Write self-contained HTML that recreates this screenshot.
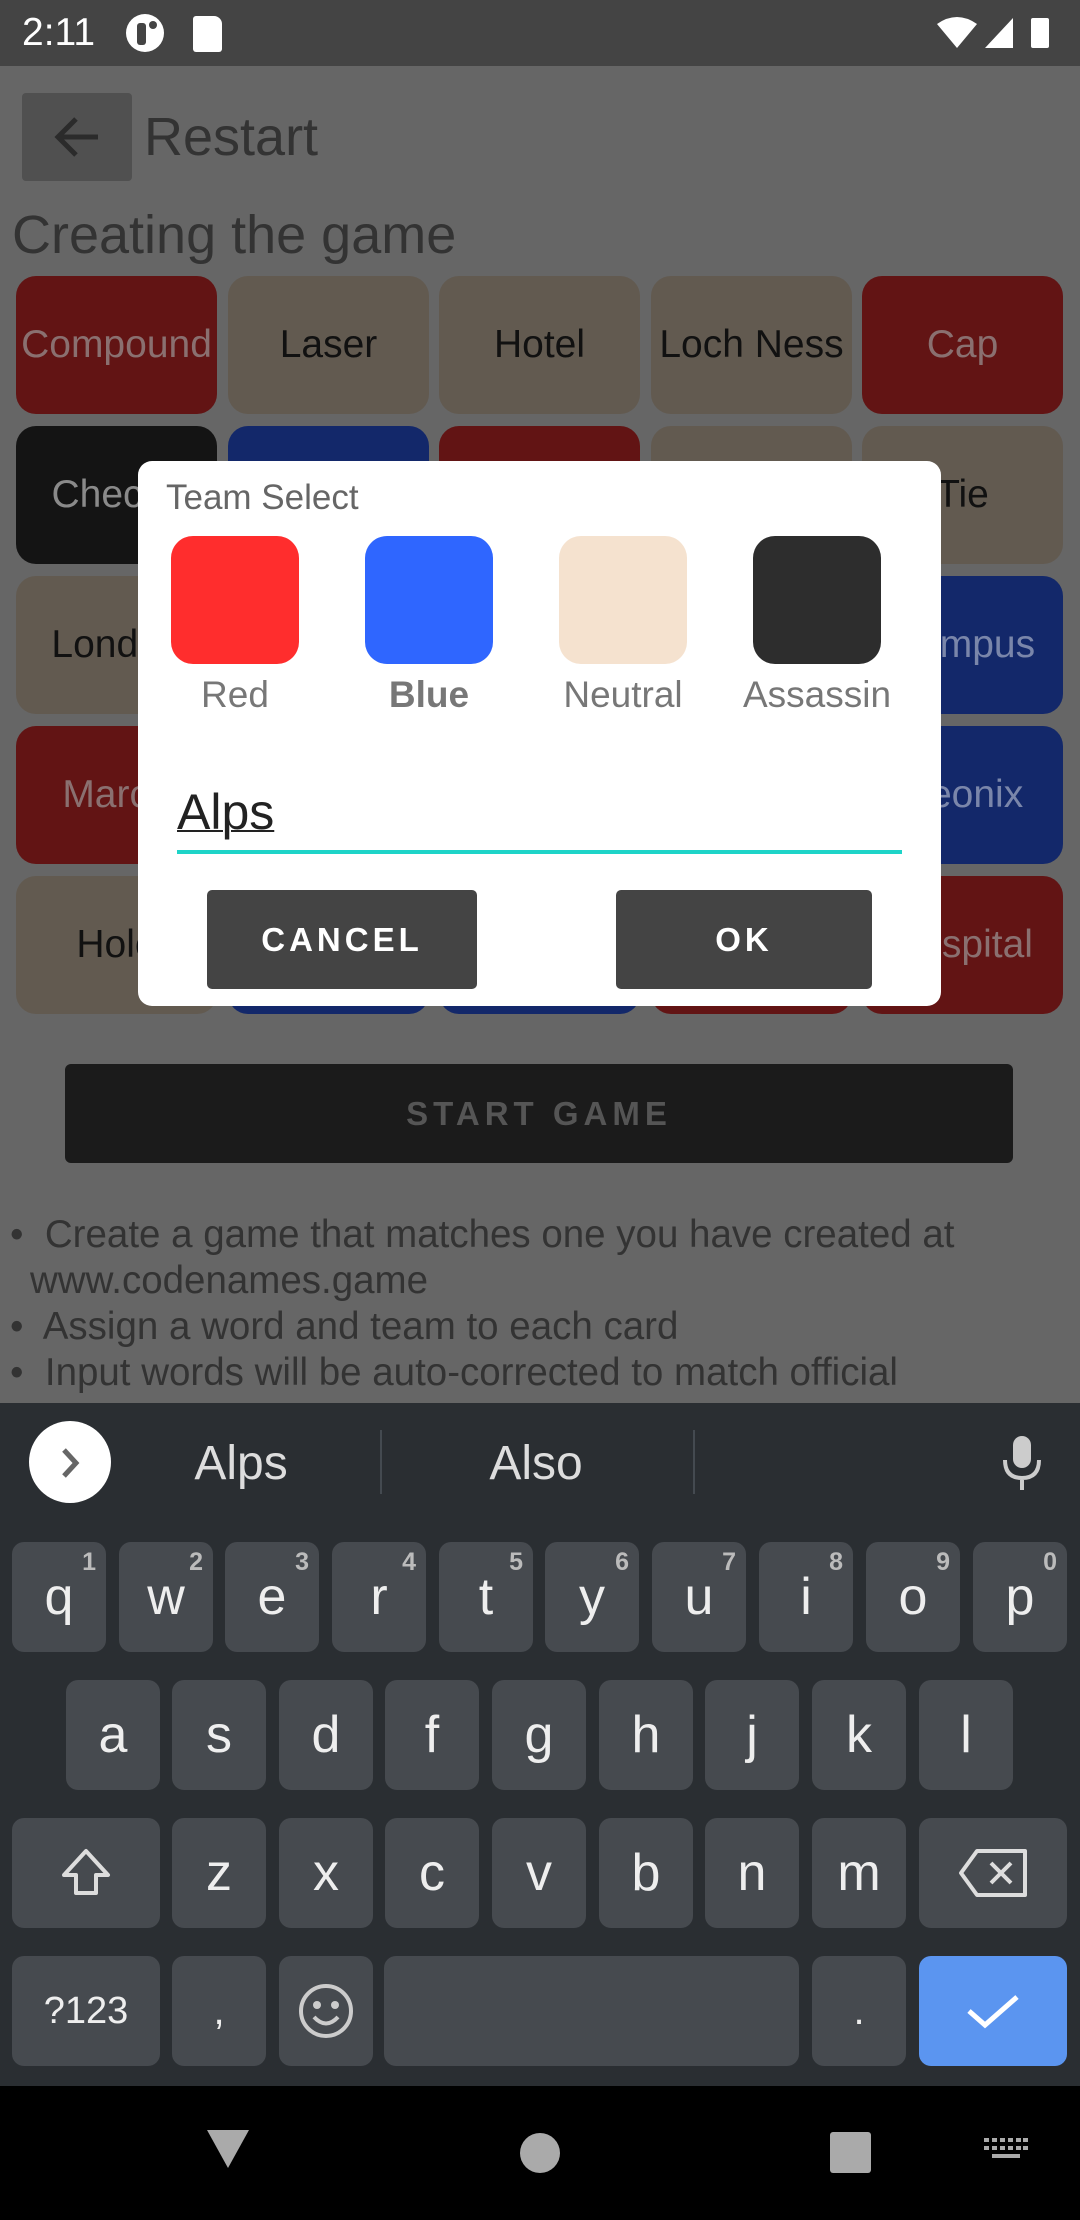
<!DOCTYPE html>
<html><head><meta charset="utf-8"><style>
*{margin:0;padding:0;box-sizing:border-box}
body{width:1080px;height:2220px;background:#666;position:relative;overflow:hidden;font-family:"Liberation Sans",Roboto,sans-serif}
.a{position:absolute}
.card{position:absolute;width:201px;height:138px;border-radius:20px;display:flex;align-items:center;justify-content:center;font-size:39px;white-space:nowrap;overflow:hidden}
.r{background:#621414;color:#8a7070}.n{background:#625a50;color:#111}.b{background:#13286a;color:#7a86aa}.k{background:#141414;color:#8a8a8a}
.sw{position:absolute;top:536px;width:128px;height:128px;border-radius:22px}
.lbl{position:absolute;top:674px;width:200px;text-align:center;font-size:37px;color:#777}
.key{position:absolute;width:94px;height:110px;background:#464a4f;border-radius:12px;color:#eee;font-size:52px;display:flex;align-items:center;justify-content:center}
.key sup{position:absolute;top:6px;right:10px;font-size:25px;color:#bbb;font-weight:bold}
.bul{position:absolute;left:10px;font-size:38.5px;color:#333;white-space:nowrap}
</style></head><body>
<div class="a" style="left:0;top:0;width:1080px;height:66px;background:#444"></div>
<div class="a" style="left:22px;top:11px;font-size:39px;color:#fff">2:11</div>
<div class="a" style="left:126px;top:14px;width:38px;height:38px;border-radius:50%;background:#fff"></div>
<div class="a" style="left:137px;top:23px;width:9px;height:22px;background:#444;border-radius:3px"></div>
<div class="a" style="left:149px;top:21px;width:8px;height:8px;background:#444;border-radius:50%"></div>
<div class="a" style="left:193px;top:16px;width:29px;height:36px;background:#fff;border-radius:3px 8px 3px 3px"></div>
<svg class="a" style="left:935px;top:14px" width="120" height="38"><path d="M2 10 Q22 -4 42 10 L22 34Z" fill="#fff"/><path d="M50 34 L78 4 L78 34Z" fill="#fff"/><rect x="96" y="4" width="18" height="30" rx="2" fill="#fff"/></svg>
<div class="a" style="left:22px;top:93px;width:110px;height:88px;background:#505050;border-radius:4px"></div>
<svg class="a" style="left:50px;top:112px" width="54" height="50"><path d="M8 25 H48 M26 7 L8 25 L26 43" stroke="#2b2b2b" stroke-width="5" fill="none"/></svg>
<div class="a" style="left:144px;top:106px;font-size:54px;color:#333">Restart</div>
<div class="a" style="left:12px;top:204px;font-size:54px;color:#333">Creating the game</div>
<div class="card r" style="left:16px;top:276px">Compound</div>
<div class="card n" style="left:228px;top:276px">Laser</div>
<div class="card n" style="left:439px;top:276px">Hotel</div>
<div class="card n" style="left:651px;top:276px">Loch Ness</div>
<div class="card r" style="left:862px;top:276px">Cap</div>
<div class="card k" style="left:16px;top:426px">Checks</div>
<div class="card b" style="left:228px;top:426px"></div>
<div class="card r" style="left:439px;top:426px"></div>
<div class="card n" style="left:651px;top:426px"></div>
<div class="card n" style="left:862px;top:426px">Tie</div>
<div class="card n" style="left:16px;top:576px">London</div>
<div class="card n" style="left:228px;top:576px"></div>
<div class="card n" style="left:439px;top:576px"></div>
<div class="card n" style="left:651px;top:576px"></div>
<div class="card b" style="left:862px;top:576px">Campus</div>
<div class="card r" style="left:16px;top:726px">March</div>
<div class="card r" style="left:228px;top:726px"></div>
<div class="card r" style="left:439px;top:726px"></div>
<div class="card r" style="left:651px;top:726px"></div>
<div class="card b" style="left:862px;top:726px">Neonix</div>
<div class="card n" style="left:16px;top:876px">Hole</div>
<div class="card b" style="left:228px;top:876px"></div>
<div class="card b" style="left:439px;top:876px"></div>
<div class="card r" style="left:651px;top:876px"></div>
<div class="card r" style="left:862px;top:876px">Hospital</div>
<div class="a" style="left:65px;top:1064px;width:948px;height:99px;background:#1b1b1b;border-radius:6px;color:#555;font-size:33px;font-weight:bold;letter-spacing:5px;display:flex;align-items:center;justify-content:center">START GAME</div>
<div class="bul" style="top:1213px">•&nbsp; Create a game that matches one you have created at</div>
<div class="bul" style="top:1259px;left:30px">www.codenames.game</div>
<div class="bul" style="top:1305px">•&nbsp; Assign a word and team to each card</div>
<div class="bul" style="top:1351px">•&nbsp; Input words will be auto-corrected to match official</div>
<div class="a" style="left:138px;top:461px;width:803px;height:545px;background:#fff;border-radius:14px"></div>
<div class="a" style="left:166px;top:478px;font-size:35px;color:#666">Team Select</div>
<div class="sw" style="left:171px;background:#ff2d2d"></div>
<div class="sw" style="left:365px;background:#2f66ff"></div>
<div class="sw" style="left:559px;background:#f5e2cf"></div>
<div class="sw" style="left:753px;background:#2d2d2d"></div>
<div class="lbl" style="left:135px">Red</div>
<div class="lbl" style="left:329px;font-weight:bold">Blue</div>
<div class="lbl" style="left:523px">Neutral</div>
<div class="lbl" style="left:717px">Assassin</div>
<div class="a" style="left:177px;top:783px;font-size:50px;color:#222;text-decoration:underline;text-decoration-thickness:2px">Alps</div>
<div class="a" style="left:177px;top:850px;width:725px;height:4px;background:#1ed4c8"></div>
<div class="a" style="left:207px;top:890px;width:270px;height:99px;background:#444;border-radius:5px;color:#fff;font-size:33px;font-weight:bold;letter-spacing:4px;display:flex;align-items:center;justify-content:center">CANCEL</div>
<div class="a" style="left:616px;top:890px;width:256px;height:99px;background:#444;border-radius:5px;color:#fff;font-size:33px;font-weight:bold;letter-spacing:4px;display:flex;align-items:center;justify-content:center">OK</div>
<div class="a" style="left:0;top:1403px;width:1080px;height:683px;background:#2a2e32"></div>
<div class="a" style="left:29px;top:1421px;width:82px;height:82px;border-radius:50%;background:#fff"></div>
<svg class="a" style="left:56px;top:1446px" width="30" height="34"><path d="M8 4 L20 17 L8 30" stroke="#666" stroke-width="5" fill="none"/></svg>
<div class="a" style="left:141px;top:1436px;width:200px;text-align:center;font-size:48px;color:#ddd">Alps</div>
<div class="a" style="left:436px;top:1436px;width:200px;text-align:center;font-size:48px;color:#ddd">Also</div>
<div class="a" style="left:380px;top:1430px;width:2px;height:64px;background:#444a50"></div>
<div class="a" style="left:693px;top:1430px;width:2px;height:64px;background:#444a50"></div>
<svg class="a" style="left:1000px;top:1434px" width="44" height="58"><rect x="13" y="2" width="18" height="32" rx="9" fill="#ccc"/><path d="M5 26 Q5 44 22 44 Q39 44 39 26 M22 44 V56" stroke="#ccc" stroke-width="4" fill="none"/></svg>
<div class="key" style="left:12px;top:1542px">q<sup>1</sup></div>
<div class="key" style="left:119px;top:1542px">w<sup>2</sup></div>
<div class="key" style="left:225px;top:1542px">e<sup>3</sup></div>
<div class="key" style="left:332px;top:1542px">r<sup>4</sup></div>
<div class="key" style="left:439px;top:1542px">t<sup>5</sup></div>
<div class="key" style="left:545px;top:1542px">y<sup>6</sup></div>
<div class="key" style="left:652px;top:1542px">u<sup>7</sup></div>
<div class="key" style="left:759px;top:1542px">i<sup>8</sup></div>
<div class="key" style="left:866px;top:1542px">o<sup>9</sup></div>
<div class="key" style="left:973px;top:1542px">p<sup>0</sup></div>
<div class="key" style="left:66px;top:1680px">a</div>
<div class="key" style="left:172px;top:1680px">s</div>
<div class="key" style="left:279px;top:1680px">d</div>
<div class="key" style="left:385px;top:1680px">f</div>
<div class="key" style="left:492px;top:1680px">g</div>
<div class="key" style="left:599px;top:1680px">h</div>
<div class="key" style="left:705px;top:1680px">j</div>
<div class="key" style="left:812px;top:1680px">k</div>
<div class="key" style="left:919px;top:1680px">l</div>
<div class="key" style="left:12px;top:1818px;width:148px"><svg width="56" height="56"><path d="M28 6 L50 30 H38 V48 H18 V30 H6Z" stroke="#ddd" stroke-width="4" fill="none" stroke-linejoin="round"/></svg></div>
<div class="key" style="left:172px;top:1818px">z</div>
<div class="key" style="left:279px;top:1818px">x</div>
<div class="key" style="left:385px;top:1818px">c</div>
<div class="key" style="left:492px;top:1818px">v</div>
<div class="key" style="left:599px;top:1818px">b</div>
<div class="key" style="left:705px;top:1818px">n</div>
<div class="key" style="left:812px;top:1818px">m</div>
<div class="key" style="left:919px;top:1818px;width:148px"><svg width="72" height="52"><path d="M20 4 H68 V48 H20 L4 26Z" stroke="#ddd" stroke-width="4" fill="none" stroke-linejoin="round"/><path d="M34 16 L54 36 M54 16 L34 36" stroke="#ddd" stroke-width="4"/></svg></div>
<div class="key" style="left:12px;top:1956px;width:148px;font-size:38px">?123</div>
<div class="key" style="left:172px;top:1956px;font-size:40px">,</div>
<div class="key" style="left:279px;top:1956px"><svg width="58" height="58"><circle cx="29" cy="29" r="25" stroke="#ccc" stroke-width="4" fill="none"/><circle cx="20" cy="23" r="4" fill="#ccc"/><circle cx="38" cy="23" r="4" fill="#ccc"/><path d="M17 35 Q29 48 41 35" stroke="#ccc" stroke-width="4" fill="none"/></svg></div>
<div class="key" style="left:384px;top:1956px;width:415px"></div>
<div class="key" style="left:812px;top:1956px;font-size:40px">.</div>
<div class="key" style="left:919px;top:1956px;width:148px;background:#5b95f0"><svg width="56" height="40"><path d="M4 20 L20 34 L52 6" stroke="#fff" stroke-width="5" fill="none"/></svg></div>
<div class="a" style="left:0;top:2086px;width:1080px;height:134px;background:#000"></div>
<svg class="a" style="left:205px;top:2128px" width="46" height="42"><path d="M2 2 H44 L23 40Z" fill="#aaa"/></svg>
<div class="a" style="left:520px;top:2133px;width:40px;height:40px;border-radius:50%;background:#aaa"></div>
<div class="a" style="left:830px;top:2132px;width:41px;height:41px;background:#aaa;border-radius:3px"></div>
<svg class="a" style="left:984px;top:2138px" width="44" height="30"><g fill="#aaa"><rect x="0" y="0" width="5" height="4"/><rect x="8" y="0" width="5" height="4"/><rect x="16" y="0" width="5" height="4"/><rect x="24" y="0" width="5" height="4"/><rect x="32" y="0" width="5" height="4"/><rect x="39" y="0" width="5" height="4"/><rect x="0" y="8" width="5" height="4"/><rect x="8" y="8" width="5" height="4"/><rect x="16" y="8" width="5" height="4"/><rect x="24" y="8" width="5" height="4"/><rect x="32" y="8" width="5" height="4"/><rect x="39" y="8" width="5" height="4"/><rect x="8" y="16" width="28" height="4"/></g></svg>
</body></html>
